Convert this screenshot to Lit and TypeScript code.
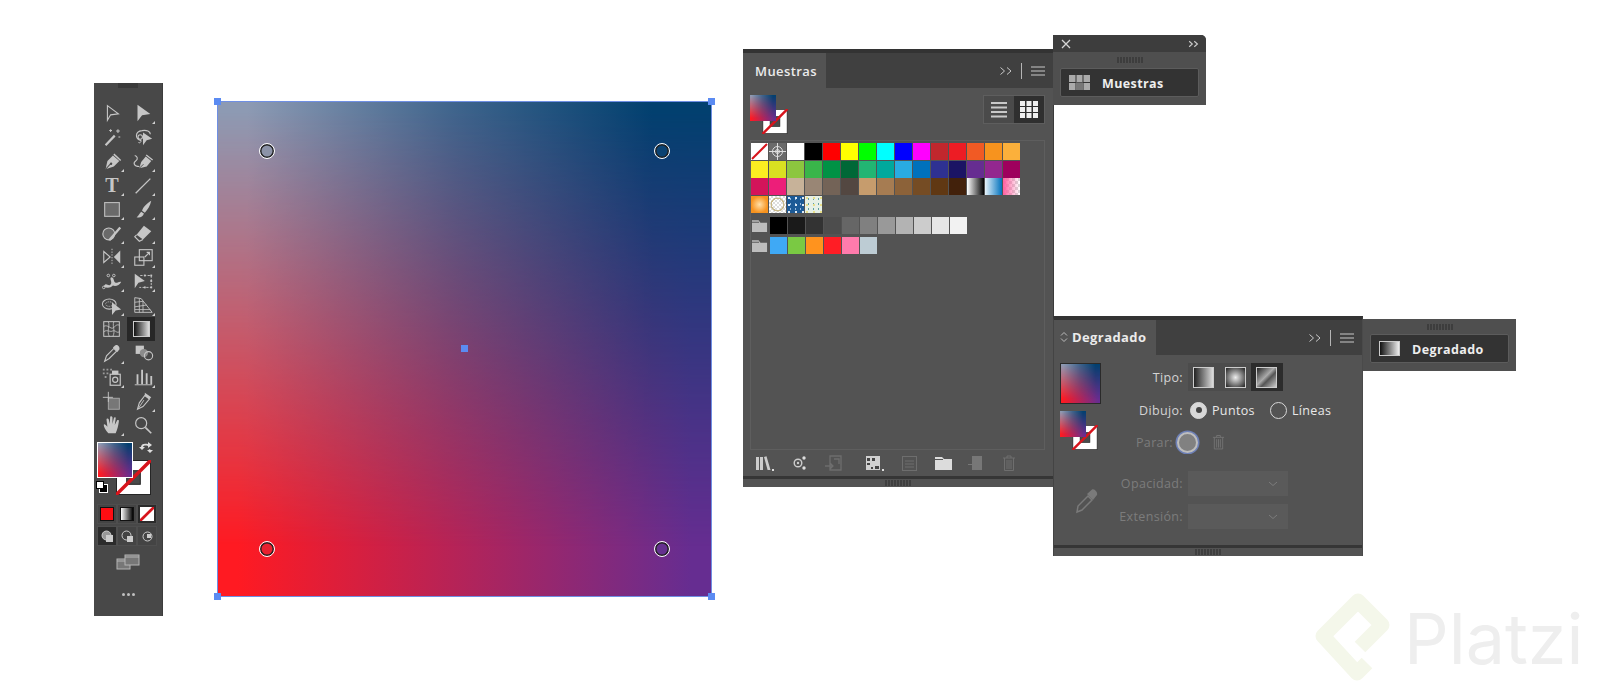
import { LitElement, html, css, svg } from "lit";
import { customElement } from "lit/decorators.js";

const tools = [
  svg`<path d="M7 4 L19 13 L10.5 14 L7 20Z" fill="none" stroke="currentColor" stroke-width="1.2"/>`,
  svg`<path d="M6 3 L20 13 L11 14.5 L6 21Z" fill="currentColor"/>`,
  svg`<path d="M5 21 L15 10.5" stroke="currentColor" stroke-width="2.4"/><path d="M16.5 5.5h4M18.5 3.5v4M9 5h3M10.5 3.5v3M19 12h2" stroke="currentColor" stroke-width="1.1"/>`,
  svg`<path d="M10 16 C3 14 3 6 11 5 C16 4 20 6 20 9" fill="none" stroke="currentColor" stroke-width="1.3"/><circle cx="9" cy="12" r="2.4" fill="none" stroke="currentColor" stroke-width="1.2"/><path d="M10 16 C10 18 8 19 7 18" fill="none" stroke="currentColor"/><path d="M12 7 L22 14 L16 15.5 L12 21Z" fill="currentColor"/>`,
  svg`<path d="M5 21 L7 12 L13 6 L20 12 L14 18Z" fill="currentColor"/><path d="M14 4.5 L21.5 11.5" stroke="currentColor" stroke-width="1.6"/><path d="M5 21 L10.5 15" stroke="#484848" stroke-width="1.2"/><circle cx="11" cy="15" r="1.3" fill="#484848"/>`,
  svg`<path d="M8 20 L10 13 L15 7 L21 12 L16 18Z" fill="currentColor"/><path d="M15.5 5.5 L22.5 11" stroke="currentColor" stroke-width="1.5"/><path d="M8 20 L12.5 15.5" stroke="#484848"/><path d="M8 18 C2 18 1 14 4 12 C7 10 6 7 3 6" fill="none" stroke="currentColor" stroke-width="1.2"/>`,
  svg`<text x="12" y="20" text-anchor="middle" font-family="Liberation Serif" font-weight="700" font-size="22" fill="currentColor">T</text>`,
  svg`<path d="M4 21 L20 5" stroke="currentColor" stroke-width="1.4"/>`,
  svg`<rect x="4" y="5" width="16" height="15" fill="#6a6a6a" stroke="#bdbdbd" stroke-width="1.2"/>`,
  svg`<path d="M21 3 C16 6 12 10 11 14 L14 16 C17 13 20 8 21 3Z M10 15 L13 17 C12 21 8 22 5 21 C7 20 8 17 10 15Z" fill="currentColor"/>`,
  svg`<circle cx="8.5" cy="13" r="6.5" fill="#6a6a6a" stroke="currentColor" stroke-width="1.2"/><path d="M9 20 L21 6" stroke="currentColor" stroke-width="2.6"/>`,
  svg`<path d="M13 4 L21 10 L12 19 L5 14Z" fill="currentColor"/><path d="M5 14 L3 16 L8 21 L12 19" fill="none" stroke="currentColor" stroke-width="1.2"/>`,
  svg`<path d="M3 6 L10 12 L3 18Z" fill="none" stroke="currentColor" stroke-width="1.2"/><path d="M21 5 L14 12 L21 19Z" fill="currentColor"/><path d="M12 3 V21" stroke="currentColor" stroke-dasharray="1.5 1.5"/>`,
  svg`<rect x="3" y="12" width="10" height="9" fill="none" stroke="currentColor" stroke-width="1.2"/><rect x="8" y="4" width="14" height="12" fill="none" stroke="currentColor" stroke-width="1.2"/><path d="M14 12 L19 7 M16 7h3v3" fill="none" stroke="currentColor" stroke-width="1.2"/>`,
  svg`<path d="M3 18 C6 12 8 20 11 15 C12 12 9 10 11 8 C15 8 13 13 16 14 C19 14 20 12 22 13 C20 17 16 18 13 17 C10 20 6 20 3 18Z" fill="currentColor"/><circle cx="3" cy="19" r="1.4" fill="none" stroke="currentColor"/><circle cx="8" cy="6" r="1.4" fill="none" stroke="currentColor"/><circle cx="14" cy="6" r="1.4" fill="none" stroke="currentColor"/>`,
  svg`<path d="M3 4 L14 12 L7 14 L3 20Z" fill="currentColor"/><path d="M9 6 H21 V19 H8" fill="none" stroke="currentColor" stroke-dasharray="2.5 1.5"/><rect x="13" y="5" width="2" height="2" fill="currentColor"/><rect x="20" y="5" width="2" height="2" fill="currentColor"/><rect x="20" y="11" width="2" height="2" fill="currentColor"/><rect x="20" y="18" width="2" height="2" fill="currentColor"/><rect x="13" y="18" width="2" height="2" fill="currentColor"/>`,
  svg`<ellipse cx="9" cy="11" rx="7.5" ry="5.5" fill="none" stroke="currentColor" stroke-width="1.1"/><ellipse cx="9" cy="11" rx="4" ry="2.5" fill="none" stroke="currentColor" stroke-dasharray="1 1"/><path d="M12 9 L22 17 L16 18 L12 23Z" fill="currentColor"/>`,
  svg`<path d="M3 4 V20 H22 L10 5Z" fill="none" stroke="currentColor"/><path d="M3 9 L12 8 M3 14 L16 12 M3 17 H20 M8 5 V20 M12 8 V20" stroke="currentColor" stroke-width=".9"/>`,
  svg`<rect x="3" y="4" width="17" height="16" fill="none" stroke="currentColor" stroke-width="1.1"/><path d="M3 9 C8 7 10 12 13 11 C15 10 17 6 20 8 M3 15 C7 12 10 16 13 14 C16 13 17 17 20 15 M8 4 C10 9 6 14 9 20 M14 4 C12 9 16 14 13 20" fill="none" stroke="currentColor" stroke-width=".9"/>`,
  null,
  svg`<path d="M4 21 L6 15 L14 7 L17 10 L9 18Z" fill="none" stroke="currentColor" stroke-width="1.2"/><path d="M13 6 L15 4 C17 2 21 5 20 8 L18 11Z" fill="currentColor"/>`,
  svg`<rect x="4" y="4" width="9" height="9" fill="currentColor"/><circle cx="13" cy="12" r="4.5" fill="#8c8c8c"/><circle cx="18" cy="15" r="4.5" fill="none" stroke="currentColor" stroke-width="1.2"/>`,
  svg`<rect x="10" y="9" width="11" height="12" fill="none" stroke="currentColor" stroke-width="1.3"/><circle cx="15.5" cy="15" r="2.8" fill="none" stroke="currentColor" stroke-width="1.3"/><rect x="12" y="5" width="7" height="4" fill="currentColor"/><path d="M2 3h2v2H2zM6 3h2v2H6zM10 3h2v2h-2zM2 7h2v2H2zM6 7h2v2H6zM4 11h2v2H4z" fill="#9a9a9a"/>`,
  svg`<path d="M5 20 V9 h2 V20 M10 20 V4 h2 V20 M15 20 V8 h2 V20 M20 20 V11 h2 V20" fill="currentColor"/><path d="M3 20.5 H22" stroke="currentColor"/>`,
  svg`<rect x="8" y="9" width="12" height="12" fill="#777" stroke="#aaa"/><path d="M8 2 V13 M2 8 H13" stroke="currentColor"/>`,
  svg`<path d="M6 21 L8 14 L14 6 L19 10 L12 18Z" fill="none" stroke="currentColor" stroke-width="1.2"/><path d="M14 3 L21 8 L19 10 L14 6Z" fill="currentColor"/><path d="M7 20 L13 11" stroke="currentColor"/>`,
  svg`<path d="M8 21 C5 18 3 14 3 12 C3 10.5 5 11 7 14 L6 6 C6 4.5 8 4.5 8.5 6 L9.5 11 L10 3.5 C10 2 12 2 12.5 3.5 L12.5 11 L14 4.5 C14.5 3 16.5 3.5 16 5 L15 12 L17.5 7 C18 6 20 6.5 19.5 8 C19 12 18 17 16 21Z" fill="currentColor"/>`,
  svg`<circle cx="10" cy="10" r="6" fill="none" stroke="currentColor" stroke-width="1.3"/><path d="M14.5 14.5 L21 21" stroke="currentColor" stroke-width="1.8"/>`,
];
const marked = new Set([1,4,5,6,7,8,9,10,11,12,13,14,15,16,17,20,22,23,25,26]);

const checker = "conic-gradient(#d8d8d8 25%, #fff 0 50%, #d8d8d8 0 75%, #fff 0) 0 0/6px 6px";
const rows: string[][] = [
  ["none","reg","#fff","#000","#f00","#ff0","#0f0","#0ff","#00f","#f0f","#c1272d","#ed1c24","#f15a24","#f7931e","#fbb03b"],
  ["#fcee21","#d9e021","#8cc63f","#39b54a","#009245","#006837","#22b573","#00a99d","#29abe2","#0071bc","#2e3192","#1b1464","#662d91","#93278f","#9e005d"],
  ["#d4145a","#ed1e79","#c7b299","#998675","#736357","#534741","#c69c6d","#a67c52","#8c6239","#754c24","#603813","#42210b",
   "linear-gradient(to right,#fff,#000)","linear-gradient(to right,#e6f3fb,#0071bc)",`linear-gradient(to right,#ff5fa0,transparent),${checker}`],
  ["radial-gradient(circle,#ffe0a8,#f7931e 70%)",
   "radial-gradient(circle,transparent 45%,#c9b98a 48% 56%,transparent 60%),conic-gradient(#ddd 25%,#fff 0 50%,#ddd 0 75%,#fff 0) 0 0/4px 4px",
   "radial-gradient(circle at 30% 30%,#dfeaf5 14%,transparent 18%) 0 0/7px 7px,radial-gradient(circle at 70% 60%,#8fb5dc 16%,transparent 20%) 0 0/5px 5px,#1c5a96",
   "radial-gradient(circle at 30% 30%,#e8df8a 14%,transparent 20%) 0 0/7px 7px,radial-gradient(circle at 70% 60%,#5f9fa0 16%,transparent 22%) 0 0/5px 5px,#e6f0e6"],
];
const grays = ["#000","#1a1a1a","#333","#4d4d4d","#666","#808080","#999","#b3b3b3","#ccc","#e6e6e6","#f2f2f2"];
const brights = ["#3fa9f5","#7ac943","#ff931e","#ff1d25","#ff7bac","#bdccd4"];

const strokeSwatch = html`<svg viewBox="0 0 36 36" class="fillsvg"><rect x=".5" y=".5" width="35" height="35" fill="#fff" stroke="#222"/><rect x="11" y="11" width="14" height="14" fill="#4a4a4a" stroke="#222"/><path d="M0 36 L36 0" stroke="#d7141c" stroke-width="3.5"/></svg>`;
const folder = html`<svg class="folder" viewBox="0 0 17 14"><path d="M0 1 H7 L9 3.5 H16 V13.5 H0Z" fill="#bdbdbd"/><path d="M0 3 H7.5" stroke="#535353"/></svg>`;
const grip = html`<svg class="gripsvg" viewBox="0 0 26 6" width="26" height="6"><path d="M1 0v6M4 0v6M7 0v6M10 0v6M13 0v6M16 0v6M19 0v6M22 0v6M25 0v6" stroke="#2d2d2d"/></svg>`;
const chevrons = html`<svg class="chev" viewBox="0 0 14 10" width="14" height="10"><path d="M1.5 1.5 L5.5 5 L1.5 8.5 M8 1.5 L12 5 L8 8.5" fill="none" stroke="currentColor"/></svg>`;
const menu = html`<svg viewBox="0 0 14 10" width="14" height="10"><path d="M0 1h14M0 5h14M0 9h14" stroke="currentColor"/></svg>`;
const trash = (c: string, w = 14, h = 16) => html`<svg viewBox="0 0 14 16" width=${w} height=${h}><path d="M1 3h12M5 3V1h4v2M2.5 3V15.5H11.5V3M5 5v9M7 5v9M9 5v9" fill="none" stroke=${c}/></svg>`;

@customElement("app-root")
export class AppRoot extends LitElement {
  static styles = css`
    :host { display: block; position: relative; width: 1597px; height: 688px; background: #fff; overflow: hidden;
      font-family: "Open Sans", "DejaVu Sans", sans-serif; }
    * { box-sizing: border-box; }
    .fillsvg { display: block; width: 100%; height: 100%; }

    /* shared mesh gradient */
    .mesh { position: relative; background: linear-gradient(to right, #ff1a22 4%, #662d91 96%); }
    .mesh::before { content: ""; position: absolute; inset: 0;
      background: linear-gradient(to right, #8d9ab3 6%, #3f648c 48%, #02406f 88%);
      -webkit-mask: linear-gradient(to bottom, #000 2%, rgba(0,0,0,.52) 45%, transparent 90%);
      mask: linear-gradient(to bottom, #000 2%, rgba(0,0,0,.52) 45%, transparent 90%); }

    /* toolbox */
    .toolbox { position: absolute; left: 94px; top: 83px; width: 69px; height: 533px; background: #484848;
      border-right: 1px solid #3c3c3c; color: #c6c6c6; display: flex; flex-direction: column; align-items: stretch; }
    .tb-grip { height: 5px; width: 20px; align-self: center; background: #3a3a3a; }
    .tools { display: grid; grid-template-columns: 31px 31px; grid-auto-rows: 24px; margin: 13px 0 0 2px; }
    .tool { position: relative; display: flex; align-items: center; justify-content: center; }
    .tool.on { background: #272727; margin: 0 3px 0 0; }
    .tool svg { width: 22px; height: 22px; display: block; }
    .tool.mk::after { content: ""; position: absolute; right: 3px; bottom: 1px; border-style: solid; border-width: 0 0 3.5px 3.5px; border-color: transparent transparent #d0d0d0 transparent; }
    .grad-ico { width: 17px; height: 16px; border: 1px solid #ccc; background: linear-gradient(to right, #111, #ddd); }
    .colors { position: relative; height: 56px; margin-top: 5px; }
    .c-fill { position: absolute; left: 3px; top: 0; width: 36px; height: 36px; border: 1px solid #fff; z-index: 1; }
    .c-stroke { position: absolute; left: 22px; top: 18px; width: 35px; height: 35px; }
    .c-swap { position: absolute; left: 45px; top: 0; width: 14px; height: 14px; }
    .c-def { position: absolute; left: 2px; top: 39px; width: 12px; height: 12px; }
    .modes, .draws { display: flex; margin: 6px 0 0 3px; width: 60px; height: 20px; }
    .modes div, .draws div { flex: 1; display: flex; align-items: center; justify-content: center; background: #444; border: 1px solid #4e4e4e; }
    .modes .on, .draws .on { background: #2b2b2b; }
    .modes i { display: block; width: 14px; height: 14px; border: 1px solid #111; }
    .draws { margin-top: 2px; }
    .draws svg { width: 13px; height: 13px; }
    .screen { display: flex; justify-content: center; margin-top: 8px; }
    .dots { display: flex; justify-content: center; gap: 2px; margin-top: 23px; }
    .dots i { width: 3px; height: 3px; background: #c0c0c0; border-radius: 50%; }

    /* artwork on canvas */
    .art { position: absolute; left: 218px; top: 102px; width: 493px; height: 494px; outline: 1px solid #6f8fe4; }
    .h { position: absolute; width: 7px; height: 7px; background: #5b8bf2; z-index: 1; }
    .h.tl { left: -4px; top: -4px; } .h.tr { right: -4px; top: -4px; } .h.bl { left: -4px; bottom: -4px; } .h.br { right: -4px; bottom: -4px; }
    .h.c { left: 243px; top: 243px; }
    .pt { position: absolute; width: 16px; height: 16px; border-radius: 50%; border: 1.5px solid #fff; z-index: 1; box-shadow: inset 0 0 0 1.5px #222; }
    .pt.a { left: 41px; top: 41px; background: #8c93a8; } .pt.b { left: 436px; top: 41px; background: #0a4272; }
    .pt.d { left: 41px; top: 439px; background: #e8202f; } .pt.e { left: 436px; top: 439px; background: #65308f; }

    /* panels */
    .panel { position: absolute; background: #535353; color: #e8e8e8; display: flex; flex-direction: column; border-top: 4px solid #333; }
    .muestras { left: 743px; top: 49px; width: 311px; height: 438px; border-right: 1px solid #3a3a3a; }
    .degradado { left: 1053px; top: 316px; width: 310px; height: 240px; border-right: 1px solid #4a4a4a; border-left: 1px solid #444; z-index: 1; }
    .tabs { height: 35px; background: #404040; display: flex; align-items: center; flex: none; color: #c8c8c8; padding-right: 8px; }
    .tab { height: 100%; background: #535353; color: #ebebeb; display: flex; align-items: center; font-size: 13px; font-weight: 600; letter-spacing: .4px; }
    .muestras .tab { width: 83px; padding-left: 12px; }
    .degradado .tab { width: 102px; padding: 0 0 2px 6px; gap: 4px; font-weight: 700; }
    .updown { width: 8px; height: 12px; }
    .sp { flex: 1; }
    .sep { width: 1px; height: 16px; background: #b5b5b5; margin: 0 9px 0 8px; }
    .grip { height: 11px; flex: none; border-top: 3px solid #363636; display: flex; justify-content: center; align-items: center; }
    .m-top { height: 52px; flex: none; display: flex; justify-content: space-between; padding: 7px 8px 0 7px; }
    .mini { position: relative; width: 39px; height: 39px; flex: none; }
    .mini .f { position: absolute; left: 0; top: 0; width: 26px; height: 26px; z-index: 1; }
    .mini .s { position: absolute; right: 0; bottom: 0; width: 26px; height: 25px; }
    .views { display: flex; height: 29px; border: 1px solid #5e5e5e; background: #4a4a4a; }
    .views div { width: 30px; display: flex; align-items: center; justify-content: center; }
    .views .on { background: #2f2f2f; }
    .list { flex: 1; margin: 0 8px 0 7px; border: 1px solid #5e5e5e; padding: 2px 0; display: flex; flex-direction: column; }
    .srow { display: flex; height: 17.7px; flex: none; }
    .s { width: 17px; height: 17px; margin-right: 1px; flex: none; position: relative; }
    .group { margin-top: 3px; }
    .group + .group { margin-top: 2.6px; }
    .folder { width: 16px; height: 14px; margin: 2px 2px 0 1px; flex: none; }
    .foot { height: 26px; flex: none; display: grid; grid-template-columns: 36px 34px 40px 36px 34px 32px 34px 20px; padding-left: 10px; align-items: center; }
    .foot div { width: 20px; height: 18px; display: flex; align-items: center; justify-content: center; position: relative; }
    .foot .mk::after { content: ""; position: absolute; right: -1px; bottom: 1px; width: 2px; height: 2px; background: #ddd; }

    /* degradado body */
    .d-body { flex: 1; display: flex; padding: 8px 0 0 6px; }
    .d-left { width: 47px; flex: none; }
    .d-big { width: 41px; height: 41px; border: 1px solid #2a2a2a; }
    .d-left .mini { margin-top: 7px; }
    .d-drop { display: block; margin: 38px 0 0 15px; color: #7a7a7a; }
    .d-form { display: grid; grid-template-columns: 76px auto; column-gap: 5px; grid-template-rows: 28px 26px 26px 4px 25px 27px; row-gap: 6px; align-items: center; justify-items: start; font-size: 12.5px; letter-spacing: .35px; }
    .d-form > label { justify-self: end; color: #d4d4d4; }
    .d-form > label.off { color: #7c7c7c; }
    .d-form > label.r3 { margin-right: 10px; }
    .d-form > .stop { margin-left: -10px; }
    .gap { grid-column: 1 / -1; }
    .d-form > .sel3 { align-self: end; }
    .d-form > label.sel3 { line-height: 25px; }
    .types { display: flex; height: 28px; background: #4c4c4c; }
    .types div { width: 31.5px; display: flex; align-items: center; justify-content: center; }
    .types .on { background: #2c2c2c; }
    .types i { display: block; width: 21px; height: 21px; border: 1px solid #ccc; }
    .radios { display: flex; align-items: center; gap: 5px; }
    .rd { width: 17px; height: 17px; border-radius: 50%; border: 1.5px solid #d8d8d8; display: flex; align-items: center; justify-content: center; flex: none; margin-left: 2px; }
    .rd.on { background: #d8d8d8; }
    .rd.on::after { content: ""; width: 6px; height: 6px; border-radius: 50%; background: #444; }
    .rd2 { margin-left: 10px; }
    .stop { display: flex; align-items: center; gap: 14px; }
    .stopc { width: 21px; height: 21px; border-radius: 50%; background: #8a8a8a; border: 2px solid #d0d0d0; box-shadow: 0 0 0 1.5px #7288c8; opacity: .85; margin-left: -1px; }
    .sel { width: 100px; height: 25px; background: #5a5a5a; display: flex; align-items: center; justify-content: flex-end; padding-right: 10px; }
    .sel svg { display: block; }

    /* collapsed docks */
    .dock { position: absolute; background: #4f4f4f; color: #eee; display: flex; flex-direction: column; }
    .d1 { left: 1053px; top: 35px; width: 153px; height: 70px; border-radius: 0 5px 0 0; }
    .d2 { left: 1363px; top: 319px; width: 153px; height: 52px; }
    .titlebar { height: 17px; flex: none; background: #3d3d3d; display: flex; align-items: center; justify-content: space-between; padding: 0 7px 0 8px; color: #c8c8c8; border-radius: 0 5px 0 0; }
    .dgrip { height: 16px; flex: none; display: flex; justify-content: center; align-items: center; }
    .d2 .dgrip { height: 15px; }
    .dbtn { margin: 0 7px; height: 29px; background: #333; border: 1px solid #5c5c5c; border-radius: 2px; display: flex; align-items: center; padding-left: 8px; gap: 12px; font-size: 12.5px; font-weight: 700; letter-spacing: .4px; }
    .dbtn svg, .dbtn i { display: block; width: 21px; height: 15px; flex: none; }
    .dbtn i { border: 1px solid #ccc; background: linear-gradient(to right, #111, #eee); }
    .dbtn span { padding-top: 2px; }

    /* watermark */
    .wm { position: absolute; left: 1315px; top: 593px; display: flex; align-items: center; gap: 13px; color: #eeeeee; }
    .wm svg { display: block; width: 76px; height: 88px; flex: none; }
    .wm span { font-family: "Inter", sans-serif; font-weight: 400; font-size: 70px; line-height: 72px; margin-top: 3px; }
  `;

  private swatch(v: string) {
    if (v === "none") return html`<div class="s" style="background:#fff"><svg class="fillsvg" viewBox="0 0 17 17"><path d="M1 16 L16 1" stroke="#d7141c" stroke-width="2"/></svg></div>`;
    if (v === "reg") return html`<div class="s" style="background:#6a6a6a"><svg class="fillsvg" viewBox="0 0 17 17"><circle cx="8.5" cy="8.5" r="5" fill="none" stroke="#ddd"/><circle cx="8.5" cy="8.5" r="2" fill="none" stroke="#ddd"/><path d="M0 8.5H17M8.5 0V17" stroke="#ddd"/></svg></div>`;
    return html`<div class="s" style="background:${v}"></div>`;
  }

  render() {
    return html`
      <div class="toolbox">
        <div class="tb-grip"></div>
        <div class="tools">
          ${tools.map((t, i) => html`<div class="tool ${marked.has(i) ? "mk" : ""} ${i === 19 ? "on" : ""}">
            ${t ? html`<svg viewBox="0 0 24 24">${t}</svg>` : html`<div class="grad-ico"></div>`}
          </div>`)}
        </div>
        <div class="colors">
          <div class="c-fill mesh"></div>
          <div class="c-stroke">${strokeSwatch}</div>
          <svg class="c-swap" viewBox="0 0 14 14"><path d="M2 5 C2 2 5 1 9 2 L9 0 L13 3 L9 6 L9 4 C6 3 4 4 4 5 L6 5 L3 8 L0 5Z M12 8 L14 8 L11 11 L8 8 L10 8 C10 7 9 6 8 6 L8 6Z M11 11 L11 14" fill="#ddd"/></svg>
          <svg class="c-def" viewBox="0 0 12 12"><rect x="3.5" y="3.5" width="8" height="8" fill="#000" stroke="#fff"/><rect x=".5" y=".5" width="7" height="7" fill="#fff" stroke="#000"/></svg>
        </div>
        <div class="modes">
          <div><i style="background:#ff0d12"></i></div>
          <div><i style="background:linear-gradient(to right,#fff,#000)"></i></div>
          <div class="on"><svg viewBox="0 0 13 13" style="width:14px;height:14px"><rect width="13" height="13" fill="#fff"/><path d="M0 13L13 0" stroke="#d7141c" stroke-width="2.5"/></svg></div>
        </div>
        <div class="draws">
          <div class="on"><svg viewBox="0 0 13 13"><circle cx="5.5" cy="5.5" r="4.5" fill="#999" stroke="#ccc"/><rect x="5" y="5" width="7" height="7" fill="#ccc"/></svg></div>
          <div><svg viewBox="0 0 13 13"><circle cx="5.5" cy="5.5" r="4.5" fill="none" stroke="#ccc"/><rect x="6" y="6" width="6" height="6" fill="#ccc"/></svg></div>
          <div><svg viewBox="0 0 13 13"><circle cx="6.5" cy="6.5" r="4.5" fill="none" stroke="#ccc"/><rect x="6" y="4" width="4" height="4" fill="#ccc"/></svg></div>
        </div>
        <div class="screen"><svg viewBox="0 0 24 16" width="24" height="16"><rect x="1" y="5" width="13" height="10" fill="#777" stroke="#b5b5b5"/><rect x="9" y="1" width="14" height="10" fill="#777" stroke="#b5b5b5"/><path d="M9 3h14M1 7h8" stroke="#b5b5b5"/></svg></div>
        <div class="dots"><i></i><i></i><i></i></div>
      </div>

      <div class="art mesh">
        <i class="h tl"></i><i class="h tr"></i><i class="h bl"></i><i class="h br"></i><i class="h c"></i>
        <i class="pt a"></i><i class="pt b"></i><i class="pt d"></i><i class="pt e"></i>
      </div>

      <section class="panel muestras">
        <div class="tabs"><div class="tab">Muestras</div><div class="sp"></div>${chevrons}<div class="sep"></div>${menu}</div>
        <div class="m-top">
          <div class="mini"><div class="f mesh"></div><div class="s">${strokeSwatch}</div></div>
          <div class="views">
            <div><svg width="16" height="17" viewBox="0 0 16 17"><path d="M0 2h16M0 6.5h16M0 11h16M0 15.5h16" stroke="#c8c8c8" stroke-width="2"/></svg></div>
            <div class="on"><svg width="18" height="17" viewBox="0 0 18 17"><path d="M0 0h5v5H0zM6.5 0h5v5h-5zM13 0h5v5h-5zM0 6h5v5H0zM6.5 6h5v5h-5zM13 6h5v5h-5zM0 12h5v5H0zM6.5 12h5v5h-5zM13 12h5v5h-5z" fill="#f0f0f0"/></svg></div>
          </div>
        </div>
        <div class="list">
          ${rows.map(r => html`<div class="srow">${r.map(v => this.swatch(v))}</div>`)}
          <div class="srow group">${folder}${grays.map(v => this.swatch(v))}</div>
          <div class="srow group">${folder}${brights.map(v => this.swatch(v))}</div>
        </div>
        <div class="foot">
          <div class="mk"><svg width="15" height="14" viewBox="0 0 15 14"><path d="M0 1h3v13H0zM4 1h3v13H4zM8 1l2.5-.8 4 13.8-2.7.8z" fill="#ccc"/></svg></div>
          <div><svg width="14" height="14" viewBox="0 0 14 14"><circle cx="6" cy="7" r="3.8" fill="none" stroke="#ccc" stroke-width="1.4"/><circle cx="6" cy="7" r="1.2" fill="#ccc"/><circle cx="12" cy="2" r="1.7" fill="#ddd"/><circle cx="12" cy="12" r="1.7" fill="#ddd"/></svg></div>
          <div><svg width="17" height="16" viewBox="0 0 17 16"><path d="M5 1h11v14H5zM0 11h8M5 8l3 3-3 3M9 4h5v5" fill="none" stroke="#6e6e6e" stroke-width="1.3"/></svg></div>
          <div class="mk"><svg width="14" height="14" viewBox="0 0 14 14"><rect width="14" height="14" fill="#d0d0d0"/><path d="M1 2h3v3H1zM6 2h3v3H6zM1 7h3v2H1zM9 10h4v3H9zM5 11h2v2H5z" fill="#444"/></svg></div>
          <div><svg width="15" height="15" viewBox="0 0 15 15"><rect x=".5" y=".5" width="14" height="14" fill="none" stroke="#6e6e6e"/><path d="M3 5h9M3 8h9M3 11h9" stroke="#6e6e6e"/></svg></div>
          <div><svg width="17" height="13" viewBox="0 0 17 13"><path d="M0 0h7l2 2h8v11H0z" fill="#dcdcdc"/><path d="M0 2.5h8" stroke="#535353"/></svg></div>
          <div><svg width="14" height="14" viewBox="0 0 14 14"><path d="M0 4h4V0h10v14H4V9H0z" fill="#777"/><path d="M0 4h4V8H0z" fill="#535353"/></svg></div>
          <div>${trash("#6e6e6e")}</div>
        </div>
        <div class="grip">${grip}</div>
      </section>

      <section class="panel degradado">
        <div class="tabs">
          <div class="tab"><svg class="updown" viewBox="0 0 8 12"><path d="M1 4.5 L4 1.5 L7 4.5 M1 7.5 L4 10.5 L7 7.5" fill="none" stroke="#bbb"/></svg>Degradado</div>
          <div class="sp"></div>${chevrons}<div class="sep"></div>${menu}
        </div>
        <div class="d-body">
          <div class="d-left">
            <div class="d-big mesh"></div>
            <div class="mini"><div class="f mesh"></div><div class="s">${strokeSwatch}</div></div>
            <svg class="d-drop" width="24" height="26" viewBox="0 0 24 26"><path d="M2 24 L3 18 L13 8 L17 12 L7 22Z" fill="none" stroke="currentColor" stroke-width="1.5"/><path d="M12 6 L17 1.5 C19 0 23 4 22 7 L18 12Z" fill="currentColor"/></svg>
          </div>
          <div class="d-form">
            <label>Tipo:</label>
            <div class="types">
              <div><i style="background:linear-gradient(to right,#222,#ddd)"></i></div>
              <div><i style="background:radial-gradient(circle,#eee,#333 90%)"></i></div>
              <div class="on"><i style="background:linear-gradient(135deg,#222,#aaa 45%,#555 60%,#ccc)"></i></div>
            </div>
            <label>Dibujo:</label>
            <div class="radios"><span class="rd on"></span><span>Puntos</span><span class="rd rd2"></span><span>Líneas</span></div>
            <label class="off r3">Parar:</label>
            <div class="stop"><span class="stopc"></span>${trash("#747474", 13, 16)}</div>
            <div class="gap"></div>
            <label class="off sel3">Opacidad:</label>
            <div class="sel sel3"><svg width="10" height="6" viewBox="0 0 10 6"><path d="M1 1 L5 4.5 L9 1" fill="none" stroke="#7c7c7c"/></svg></div>
            <label class="off sel3">Extensión:</label>
            <div class="sel sel3"><svg width="10" height="6" viewBox="0 0 10 6"><path d="M1 1 L5 4.5 L9 1" fill="none" stroke="#7c7c7c"/></svg></div>
          </div>
        </div>
        <div class="grip">${grip}</div>
      </section>

      <div class="dock d1">
        <div class="titlebar">
          <svg width="10" height="10" viewBox="0 0 10 10"><path d="M1 1 L9 9 M9 1 L1 9" stroke="#d5d5d5" stroke-width="1.3"/></svg>
          <svg width="11" height="8" viewBox="0 0 14 10"><path d="M1.5 1.5 L5.5 5 L1.5 8.5 M8 1.5 L12 5 L8 8.5" fill="none" stroke="#ccc" stroke-width="1.4"/></svg>
        </div>
        <div class="dgrip">${grip}</div>
        <div class="dbtn">
          <svg viewBox="0 0 21 15"><rect width="21" height="15" fill="#aaa"/><path d="M7 0v15M14 0v15M0 7.5h21" stroke="#333"/><rect x="7" y="7.5" width="7" height="7.5" fill="#777"/></svg>
          <span>Muestras</span>
        </div>
      </div>

      <div class="dock d2">
        <div class="dgrip">${grip}</div>
        <div class="dbtn"><i></i><span>Degradado</span></div>
      </div>

      <div class="wm">
        <svg viewBox="0 0 76 88"><path d="M52 70 L42 80 L8 43 L43 8 L67 32 L45 54" fill="none" stroke="#f4f7ea" stroke-width="15" stroke-linejoin="round"/></svg>
        <span>Platzi</span>
      </div>
    `;
  }
}
